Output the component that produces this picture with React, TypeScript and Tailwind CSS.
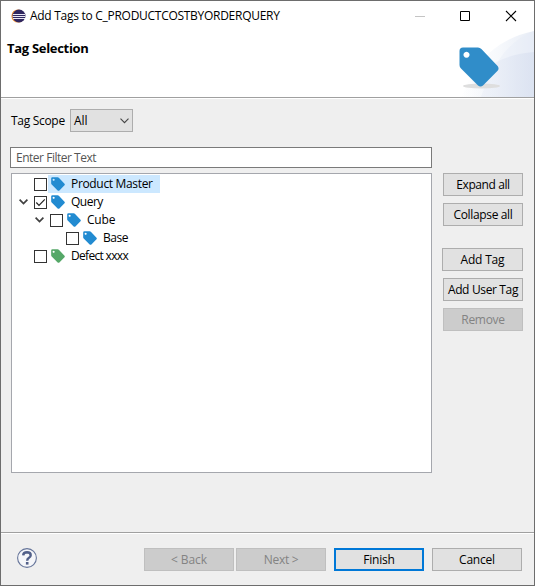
import type { ReactNode } from 'react';

function TagIcon({ color, className = '' }: { color: string; className?: string }) {
  return (
    <svg viewBox="0 0 40 40" className={className}>
      <path
        fillRule="evenodd"
        fill={color}
        d="M4 .5H19Q21 .5 22.4 2L38.6 19Q40.5 21.500 38.600 23.800L24 38.400Q21.500 40.500 19 38.400L2 21.500Q.5 20 .5 18V4Q.5.5 4 .5ZM7.500 4.700a3 3 0 1 0 .01 0Z"
      />
    </svg>
  );
}

function EclipseIcon() {
  return (
    <svg viewBox="0 0 15 14" className="h-[14px] w-[15px] shrink-0">
      <circle cx="7" cy="7" r="6.600" fill="#f0953a" />
      <circle cx="8" cy="7" r="6.500" fill="#30265f" />
      <path d="M2 5.500H14M1.600 7.500H14.400M2 9.500H14" stroke="#e9e7f3" strokeWidth="1" />
    </svg>
  );
}

function Chevron() {
  return (
    <svg viewBox="0 0 9 6" className="h-[6px] w-[9px] shrink-0" fill="none" stroke="#404040" strokeWidth="1.700">
      <path d="M.6.7 4.500 4.600 8.400.7" />
    </svg>
  );
}

function Button({ children, className = '', kind = 'normal' }: { children: ReactNode; className?: string; kind?: 'normal' | 'disabled' | 'default' }) {
  const look = {
    normal: 'border border-[#adadad] bg-[#e1e1e1] text-black',
    disabled: 'border border-[#bfbfbf] bg-[#cccccc] text-[#838383]',
    default: 'border-2 border-[#0078d7] bg-[#e1e1e1] text-black',
  }[kind];
  return (
    <button className={`flex h-[23px] shrink-0 items-center justify-center whitespace-nowrap leading-[16px] ${look} ${className}`}>
      {children}
    </button>
  );
}

type Row = { label: string; indent: string; open?: boolean; checked?: boolean; selected?: boolean; color: string; spacing: string };

const rows: Row[] = [
  { label: 'Product Master', indent: 'pl-[7px]', selected: true, color: '#228bd1', spacing: 'tracking-[-0.33px]' },
  { label: 'Query', indent: 'pl-[7px]', open: true, checked: true, color: '#228bd1', spacing: 'tracking-[-0.5px]' },
  { label: 'Cube', indent: 'pl-[23px]', open: true, color: '#228bd1', spacing: 'tracking-[-0.2px]' },
  { label: 'Base', indent: 'pl-[39px]', color: '#228bd1', spacing: 'tracking-[-0.5px]' },
  { label: 'Defect xxxx', indent: 'pl-[7px]', color: '#55a868', spacing: 'tracking-[-0.68px]' },
];

function TreeRow({ row }: { row: Row }) {
  return (
    <div className={`flex h-[18px] items-center ${row.indent}`}>
      <div className="flex w-[15px] shrink-0 items-center">{row.open && <Chevron />}</div>
      <div className="mt-px h-[13px] w-[13px] shrink-0 border border-[#333] bg-white">
        {row.checked && (
          <svg viewBox="0 0 11 11" className="h-[11px] w-[11px]" fill="none" stroke="#222" strokeWidth="1.200">
            <path d="M1.300 5.500 4 8.300 9.800 2.300" />
          </svg>
        )}
      </div>
      <div className={`ml-px flex h-[18px] items-center pl-[3px] pr-[7px] ${row.selected ? 'w-[112px] bg-[#cce8ff]' : ''}`}>
        <TagIcon color={row.color} className="h-[14px] w-[14px] shrink-0" />
        <span className={`ml-[6px] whitespace-nowrap leading-[18px] ${row.spacing}`}>{row.label}</span>
      </div>
    </div>
  );
}

export default function App() {
  return (
    <div className="flex h-[586px] w-[535px] flex-col overflow-hidden border border-[#6d6d6d] bg-[#efefef] font-['Open_Sans','Noto_Sans',sans-serif] text-[12px] text-black">
      <header className="relative h-[96px] shrink-0 bg-white">
        <svg viewBox="0 0 133 96" className="absolute right-0 top-0 h-[96px] w-[133px]">
          <defs>
            <linearGradient id="swoosh">
              <stop offset="0" stopColor="#fff" />
              <stop offset=".5" stopColor="#f7f9fc" />
              <stop offset="1" stopColor="#e8edf6" />
            </linearGradient>
            <linearGradient id="hill">
              <stop offset="0" stopColor="#e4e9f5" stopOpacity="0" />
              <stop offset="1" stopColor="#d7dfef" />
            </linearGradient>
          </defs>
          <path d="M60 96Q80 41 133 30V96Z" fill="url(#swoosh)" />
          <path d="M80 96Q98 43 133 30V96Z" fill="#e4eaf5" opacity=".35" />
          <path d="M60 96Q82 55 133 51V96Z" fill="url(#hill)" opacity=".7" />
          <ellipse cx="80.500" cy="85" rx="18.500" ry="2.500" fill="#dedede" />
        </svg>
        <TagIcon color="#308dc9" className="absolute left-[458px] top-[46px] h-[40px] w-[40px]" />
        <div className="relative flex h-[30px] items-center pl-[10px]">
          <EclipseIcon />
          <h1 className="ml-[4px] w-[350px] whitespace-nowrap leading-[30px] tracking-[-0.28px]">Add Tags to C_PRODUCTCOSTBYORDERQUERY</h1>
          <svg viewBox="0 0 102 12" className="ml-[35px] h-[12px] w-[102px]" fill="none" stroke="#000">
            <path d="M0 6.500H10" stroke="#c4c4c4" />
            <path d="M45.500 1.500H54.500V10.500H45.500Z" />
            <path d="M91 1 101 11M101 1 91 11" strokeWidth="1.100" />
          </svg>
        </div>
        <h2 className="relative pl-[6px] pt-[8px] text-[13px] font-bold leading-[18px] tracking-[-0.3px]">Tag Selection</h2>
      </header>
      <div className="h-[2px] shrink-0 border-b border-t border-b-white border-t-[#a0a0a0]" />

      <main className="flex h-[433px] shrink-0 flex-col pl-[9px] pt-[10px]">
        <div className="flex h-[23px] items-center pl-px">
          <label className="w-[59px] whitespace-nowrap tracking-[-0.3px]">Tag Scope</label>
          <div className="flex h-[23px] w-[63px] items-center justify-between border border-[#adadad] bg-[#e1e1e1] pl-[3px] pr-[3px]">
            <span>All</span>
            <svg viewBox="0 0 9 6" className="h-[6px] w-[9px]" fill="none" stroke="#444" strokeWidth="1.100">
              <path d="M.5.700 4.500 4.700 8.500.7" />
            </svg>
          </div>
        </div>
        <div className="mt-[15px] flex h-[21px] w-[422px] shrink-0 items-center border border-[#7a7a7a] bg-white pl-[5px] tracking-[-0.48px] text-[#555]">
          Enter Filter Text
        </div>
        <div className="mt-[5px] flex pl-px">
          <div className="h-[300px] w-[421px] shrink-0 border border-[#a5a7ad] bg-white pt-px">
            {rows.map((row) => (
              <TreeRow key={row.label} row={row} />
            ))}
          </div>
          <div className="flex w-[91px] flex-col items-end">
            <Button className="w-[80px] tracking-[-0.4px]">Expand all</Button>
            <Button className="mt-[7px] w-[80px] tracking-[-0.35px]">Collapse all</Button>
            <Button className="mt-[22px] w-[81px] tracking-[-0.2px]">Add Tag</Button>
            <Button className="mt-[7px] w-[80px] tracking-[-0.35px]">Add User Tag</Button>
            <Button className="mt-[7px] w-[80px] tracking-[-0.3px]" kind="disabled">Remove</Button>
          </div>
        </div>
      </main>

      <footer className="flex grow items-start border-t border-[#a0a0a0] shadow-[inset_0_1px_0_#fff]">
        <svg viewBox="0 0 20 20" className="ml-[16px] mt-[15px] h-[20px] w-[20px] shrink-0" fill="none">
          <circle cx="10" cy="10" r="9.400" fill="#f5f6f9" stroke="#66759a" strokeWidth="1.100" />
          <path d="M6.200 7.300Q6.400 4.300 10 4.300Q13.700 4.400 13.700 7.200Q13.700 8.900 11.700 10Q10.200 10.800 10.200 12.700" stroke="#526089" strokeWidth="2.400" />
          <path d="M8.900 14H11.500V16.600H8.900Z" fill="#526089" />
        </svg>
        <div className="ml-[107px] mt-[15px] flex">
          <Button className="w-[90px] tracking-[-0.1px]" kind="disabled">&lt; Back</Button>
          <Button className="ml-[2px] w-[90px] tracking-[-0.3px]" kind="disabled">Next &gt;</Button>
          <Button className="ml-[8px] w-[90px] tracking-[-0.2px]" kind="default">Finish</Button>
          <Button className="ml-[8px] w-[90px] tracking-[-0.2px]">Cancel</Button>
        </div>
      </footer>
    </div>
  );
}
